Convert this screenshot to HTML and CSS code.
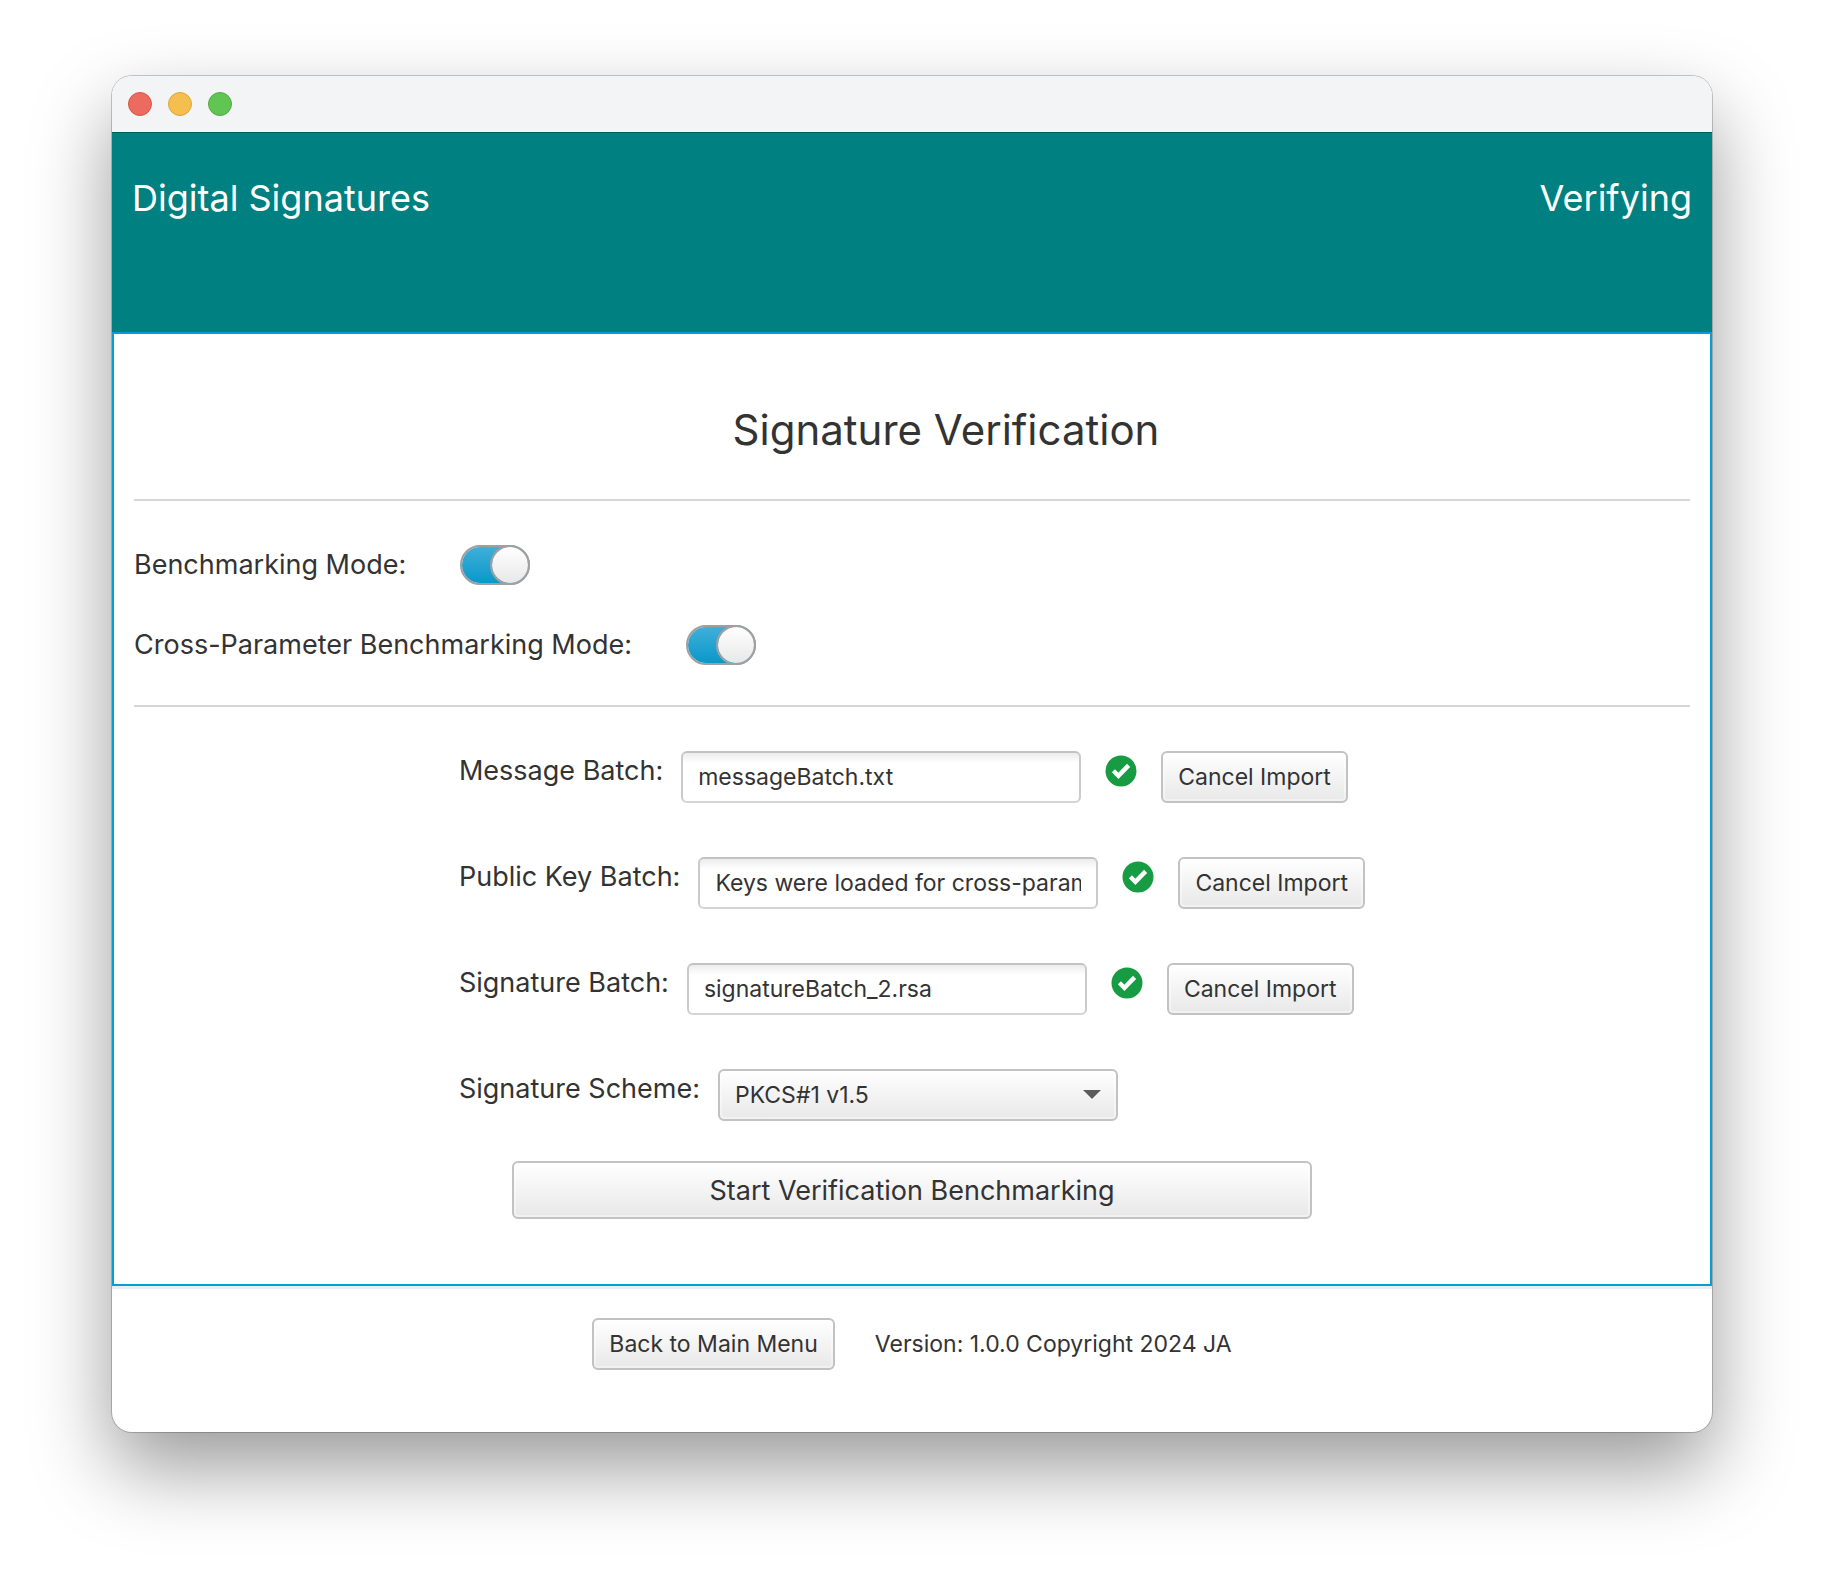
FILE: index.html
```
<!DOCTYPE html>
<html lang="en">
<head>
<meta charset="utf-8">
<meta name="viewport" content="width=device-width, initial-scale=1">
<title>Digital Signatures</title>
<link rel="stylesheet" href="styles.css">
</head>
<body>
<svg class="sprite" aria-hidden="true">
  <symbol id="check" viewBox="0 0 32 32">
    <circle cx="16" cy="16" r="15.5" fill="#179b43"/>
    <path d="M8.4 15.8l5 5L23.6 10.4" fill="none" stroke="#fff" stroke-width="4.4"/>
  </symbol>
</svg>
<div class="window">
  <div class="titlebar">
    <button class="light light-close" type="button" aria-label="Close"></button>
    <button class="light light-minimise" type="button" aria-label="Minimise"></button>
    <button class="light light-zoom" type="button" aria-label="Zoom"></button>
  </div>
  <header class="banner">
    <span>Digital Signatures</span>
    <span>Verifying</span>
  </header>
  <main class="panel">
    <h1 class="title">Signature Verification</h1>
    <hr class="separator">
    <div class="modes">
      <label class="mode">Benchmarking Mode:<input class="toggle" type="checkbox" role="switch" checked></label>
      <label class="mode">Cross-Parameter Benchmarking Mode:<input class="toggle" type="checkbox" role="switch" checked></label>
    </div>
    <hr class="separator">
    <form class="form">
      <div class="fields">
        <div class="row">
          <label class="label" for="message">Message Batch:</label>
          <input class="field" id="message" type="text" value="messageBatch.txt">
          <svg class="check"><use href="#check"/></svg>
          <button class="button" type="button">Cancel Import</button>
        </div>
        <div class="row">
          <label class="label" for="key">Public Key Batch:</label>
          <input class="field" id="key" type="text" value="Keys were loaded for cross-parameter benchmarking">
          <svg class="check"><use href="#check"/></svg>
          <button class="button" type="button">Cancel Import</button>
        </div>
        <div class="row">
          <label class="label" for="signature">Signature Batch:</label>
          <input class="field" id="signature" type="text" value="signatureBatch_2.rsa">
          <svg class="check"><use href="#check"/></svg>
          <button class="button" type="button">Cancel Import</button>
        </div>
        <div class="row">
          <label class="label" for="scheme">Signature Scheme:</label>
          <div class="choice">
            <select class="select" id="scheme"><option>PKCS#1 v1.5</option></select>
            <svg class="arrow" viewBox="0 0 18 10" aria-hidden="true"><path d="M1 2h16L9 10z" fill="#fff"/><path d="M0 0h18L9 9z" fill="#5c5c5c"/></svg>
          </div>
        </div>
      </div>
      <button class="button button-start" type="button">Start Verification Benchmarking</button>
    </form>
  </main>
  <footer class="footer">
    <button class="button" type="button">Back to Main Menu</button>
    <span>Version: 1.0.0 Copyright 2024 JA</span>
  </footer>
</div>
</body>
</html>
```
FILE: styles.css
```
*,
*::before {
  box-sizing: border-box;
}

body {
  margin: 0;
  padding: 76px 112px 148px;
  background: #fff;
  color: #333;
  font-family: Inter, "Liberation Sans", sans-serif;
  font-size: 23px;
}

.sprite {
  display: none;
}

.window {
  border-radius: 20px;
  overflow: hidden;
  background: #fff;
  box-shadow: 0 0 0 1px rgba(0, 0, 0, 0.2), 0 36px 80px rgba(0, 0, 0, 0.4);
}

/* Title bar */
.titlebar {
  display: flex;
  gap: 16px;
  padding: 16px;
  background: #f2f4f6;
}

.light {
  width: 24px;
  height: 24px;
  padding: 0;
  border: 1px solid;
  border-radius: 50%;
}

.light-close {
  background: #ec6a5e;
  border-color: #d5574c;
}

.light-minimise {
  background: #f5bf4f;
  border-color: #dba53c;
}

.light-zoom {
  background: #61c554;
  border-color: #51ab41;
}

/* Banner */
.banner {
  display: flex;
  justify-content: space-between;
  min-height: 200px;
  padding: 41px 20px;
  border-top: 1px solid #005c5c;
  background: #008080;
  color: #fff;
  font-size: 36px;
  line-height: 48px;
}

/* Main panel */
.panel {
  padding: 65px 20px;
  border: 2px solid #039ed3;
}

.title {
  margin: 0 0 38px;
  padding-left: 68px;
  font-size: 42px;
  font-weight: 400;
  line-height: 62px;
  text-align: center;
}

.separator {
  height: 2px;
  margin: 0;
  border: 0;
  background: #d6d6d6;
}

.modes {
  display: flex;
  flex-direction: column;
  align-items: flex-start;
  gap: 40px;
  padding: 44px 0 40px;
}

.mode {
  display: flex;
  align-items: center;
  gap: 54px;
  font-size: 27px;
  line-height: 40px;
}

.toggle {
  appearance: none;
  display: flex;
  justify-content: flex-end;
  width: 70px;
  height: 40px;
  margin: 0;
  border: 2px solid #a0a0a0;
  border-radius: 20px;
  background: linear-gradient(#3fafd8, #0a98cb) padding-box;
}

.toggle::before {
  content: "";
  width: 40px;
  height: 40px;
  margin: -2px;
  border: 2px solid #a0a0a0;
  border-radius: 50%;
  background: linear-gradient(#fff, #e8e8e8) padding-box;
}

.toggle:not(:checked) {
  justify-content: flex-start;
  background: #e8e8e8;
}

/* Form */
.form {
  display: flex;
  flex-direction: column;
  align-items: center;
  gap: 40px;
  padding-top: 44px;
}

.fields {
  display: flex;
  flex-direction: column;
  gap: 54px;
}

.row {
  display: flex;
  align-items: flex-start;
}

.label {
  margin-right: 18px;
  font-size: 27px;
  line-height: 40px;
}

.field,
.select,
.button {
  height: 52px;
  padding: 0 15px;
  border: 2px solid #c2c2c2;
  border-radius: 6px;
  color: #333;
  font: inherit;
}

.field,
.choice {
  width: 400px;
}

.field {
  border-color: #c2c2c2 #cacaca #d4d4d4;
  background: linear-gradient(#ececec, #fff 10px);
}

.button,
.select {
  background: linear-gradient(#fff, #e8e8e8);
  box-shadow: inset 0 0 0 2px rgba(255, 255, 255, 0.4);
}

.check {
  width: 32px;
  height: 32px;
  margin: 4px 24px;
}

.choice {
  display: grid;
  align-items: center;
}

.select {
  grid-area: 1 / 1;
  appearance: none;
  width: 100%;
}

.arrow {
  grid-area: 1 / 1;
  justify-self: end;
  width: 18px;
  height: 10px;
  margin-right: 17px;
  pointer-events: none;
}

.button-start {
  width: 100%;
  max-width: 800px;
  height: 58px;
  font-size: 27px;
}

/* Footer */
.footer {
  display: flex;
  justify-content: center;
  align-items: center;
  gap: 40px;
  padding: 29px 20px 62px;
  border-top: 3px solid #e6f0f2;
}
```
